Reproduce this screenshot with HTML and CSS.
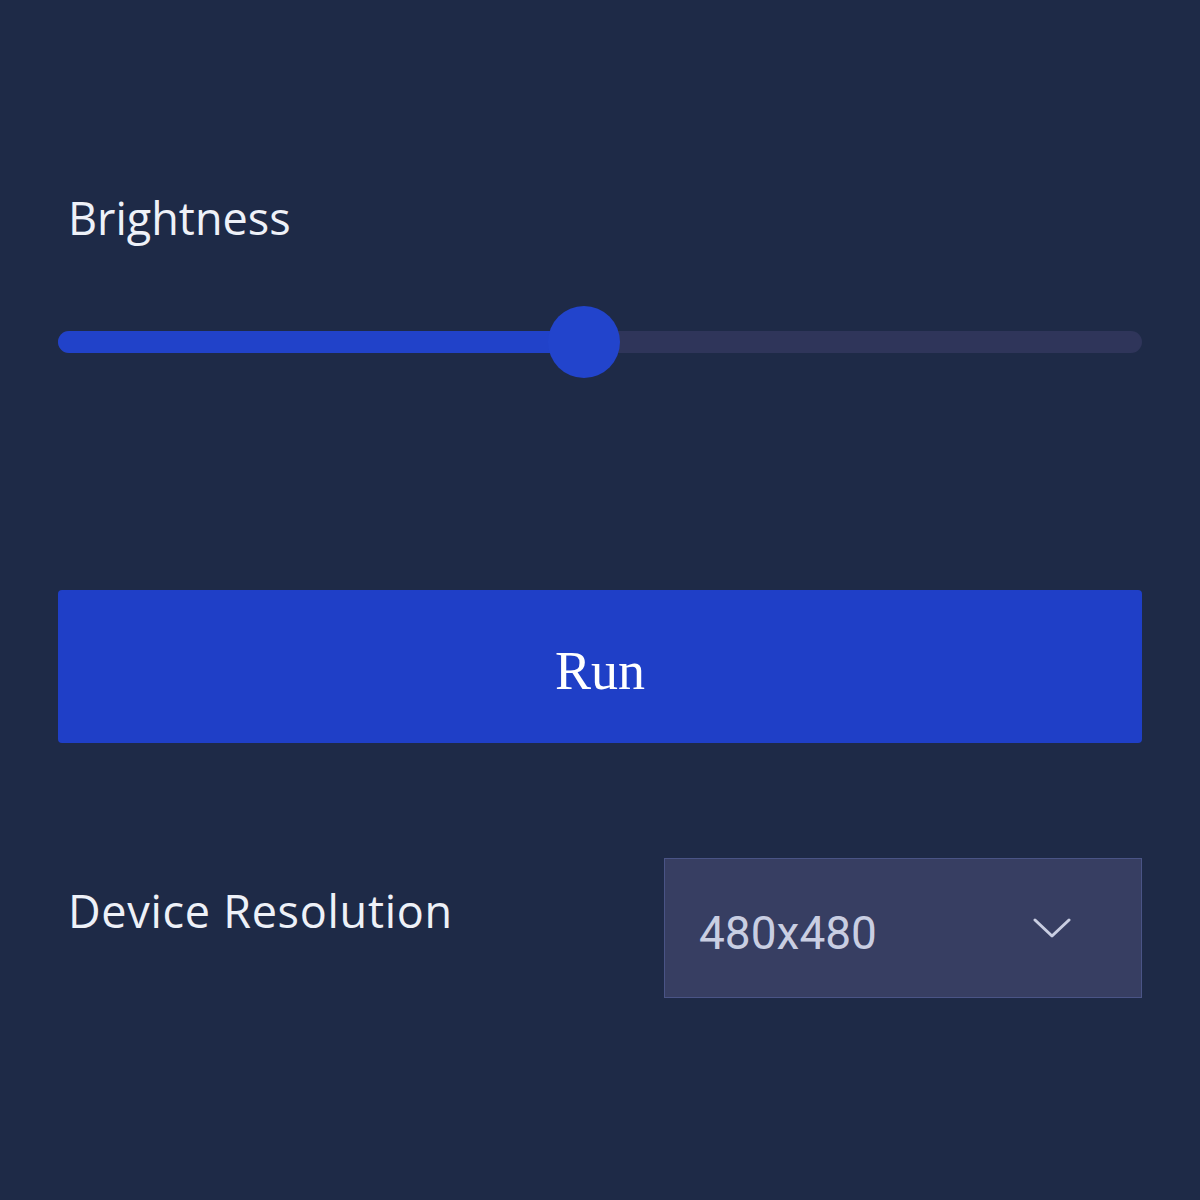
FILE: index.html
```html
<!DOCTYPE html>
<html lang="en">
<head>
<meta charset="utf-8">
<title>Settings</title>
<link rel="stylesheet" href="styles.css">
</head>
<body>
<div class="panel">
  <div class="label brightness-label">Brightness</div>
  <div class="slider">
    <div class="track">
      <div class="fill" style="width: 48.5%"></div>
      <div class="thumb" style="left: 48.5%"></div>
    </div>
  </div>
  <button class="run">Run</button>
  <div class="row">
    <div class="label res-label">Device Resolution</div>
    <div class="select">
      <span class="select-value">480x480</span>
      <svg class="chevron" width="38" height="20" viewBox="0 0 38 20" aria-hidden="true">
        <polyline points="2,2 19,18 36,2" fill="none" stroke="#c9cee2" stroke-width="3" stroke-linecap="round" stroke-linejoin="round"/>
      </svg>
    </div>
  </div>
</div>
</body>
</html>
```
FILE: styles.css
```css
html, body {
  margin: 0;
  padding: 0;
  background: #1e2a47;
}
body {
  width: 1200px;
  height: 1200px;
  font-family: "Open Sans", "Noto Sans", sans-serif;
}
.panel {
  display: flex;
  flex-direction: column;
  padding: 195px 58px 0 58px;
}
.label {
  color: #eef1f8;
  font-size: 45px;
  line-height: 45px;
  padding-left: 10px;
}
.slider {
  margin-top: 66px;
  height: 72px;
  display: flex;
  align-items: center;
}
.track {
  position: relative;
  width: 100%;
  height: 22px;
  border-radius: 11px;
  background: #2f355a;
}
.fill {
  height: 100%;
  border-radius: 11px;
  background: #2142c9;
}
.thumb {
  position: absolute;
  top: 50%;
  width: 72px;
  height: 72px;
  border-radius: 50%;
  background: #2244cc;
  transform: translate(-50%, -50%);
}
.run {
  margin-top: 212px;
  height: 153px;
  border: none;
  border-radius: 4px;
  background: #1f3fc7;
  color: #ffffff;
  font-family: "Liberation Serif", serif;
  font-size: 54px;
  padding: 0;
  padding-top: 8px;
}
.row {
  margin-top: 115px;
  display: flex;
  justify-content: space-between;
  align-items: flex-start;
}
.res-label {
  margin-top: 30px;
  letter-spacing: 0.7px;
}
.select {
  height: 138px;
  border: 1px solid #4a5486;
  background: #373e62;
  display: flex;
  align-items: center;
  justify-content: space-between;
  padding: 0 70px 0 34px;
  box-sizing: content-box;
  width: 372px;
}
.select-value {
  color: #c9cee2;
  font-family: "Roboto", "Liberation Sans", sans-serif;
  font-size: 46px;
  line-height: 45px;
  margin-top: 10px;
}
.chevron {
  display: block;
}
```
